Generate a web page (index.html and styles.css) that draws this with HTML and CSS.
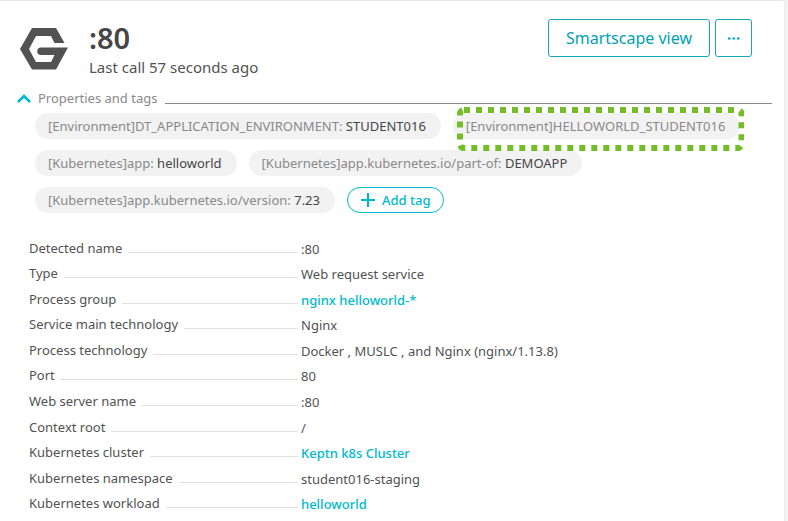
FILE: index.html
```html
<!DOCTYPE html>
<html lang="en">
<head>
<meta charset="utf-8">
<meta name="viewport" content="width=device-width, initial-scale=1">
<title>:80</title>
<link rel="stylesheet" href="styles.css">
</head>
<body>
<main class="card">
  <header class="header">
    <svg class="logo" viewBox="0 0 48 42" aria-hidden="true">
      <path d="M12 0H36L44.500 15H34.500L31 8H16L9 21L16 34H31L34.500 27H21A3.500 3.500 0 0 1 21 19.500H48L36 41.500H12L0 21Z" fill="#525252"/>
    </svg>
    <div class="heading">
      <h1 class="title">:80</h1>
      <p class="subtitle">Last call 57 seconds ago</p>
    </div>
    <div class="actions">
      <button class="button" type="button">Smartscape view</button>
      <button class="button button-more" type="button" aria-label="More">
        <svg width="12" height="3" viewBox="0 0 12 3" aria-hidden="true"><path d="M0 0.500h2.500v2H0zM4.500 0.500h2.500v2h-2.500zM9 0.500h2.500v2H9z" fill="#00a1b2"/></svg>
      </button>
    </div>
  </header>

  <section class="properties">
    <h2 class="section-head">
      <button class="toggle" type="button" aria-expanded="true">
        <svg width="14" height="9" viewBox="0 0 14 9" aria-hidden="true"><path d="M1 8L7 2L13 8" fill="none" stroke="#00b9cc" stroke-width="2.500"/></svg>
        Properties and tags
      </button>
    </h2>

    <ul class="tags">
      <li class="tag">[Environment]DT_APPLICATION_ENVIRONMENT: <span class="tag-value">STUDENT016</span></li>
      <li class="tag tag-marked">[Environment]HELLOWORLD_STUDENT016
        <svg class="marker" aria-hidden="true"><rect class="marker-line" x="3" y="3" rx="4"/></svg>
      </li>
      <li class="tag">[Kubernetes]app: <span class="tag-value">helloworld</span></li>
      <li class="tag">[Kubernetes]app.kubernetes.io/part-of: <span class="tag-value">DEMOAPP</span></li>
      <li class="tag">[Kubernetes]app.kubernetes.io/version: <span class="tag-value">7.23</span></li>
      <li>
        <button class="add-tag" type="button">
          <svg width="14" height="14" viewBox="0 0 14 14" aria-hidden="true"><path d="M7 0V14M0 7H14" stroke="#00b9cc" stroke-width="2"/></svg>
          Add tag
        </button>
      </li>
    </ul>

    <dl class="details">
      <div class="row"><dt class="label">Detected name</dt><dd class="value">:80</dd></div>
      <div class="row"><dt class="label">Type</dt><dd class="value">Web request service</dd></div>
      <div class="row"><dt class="label">Process group</dt><dd class="value"><a class="link" href="#">nginx helloworld-*</a></dd></div>
      <div class="row"><dt class="label">Service main technology</dt><dd class="value">Nginx</dd></div>
      <div class="row"><dt class="label">Process technology</dt><dd class="value">Docker , MUSLC , and Nginx (nginx/1.13.8)</dd></div>
      <div class="row"><dt class="label">Port</dt><dd class="value">80</dd></div>
      <div class="row"><dt class="label">Web server name</dt><dd class="value">:80</dd></div>
      <div class="row"><dt class="label">Context root</dt><dd class="value">/</dd></div>
      <div class="row"><dt class="label">Kubernetes cluster</dt><dd class="value"><a class="link" href="#">Keptn k8s Cluster</a></dd></div>
      <div class="row"><dt class="label">Kubernetes namespace</dt><dd class="value">student016-staging</dd></div>
      <div class="row"><dt class="label">Kubernetes workload</dt><dd class="value"><a class="link" href="#">helloworld</a></dd></div>
    </dl>
  </section>
</main>
</body>
</html>
```
FILE: styles.css
```css
* {
  box-sizing: border-box;
}

body {
  margin: 0;
  background: #f2f2f2;
  color: #525252;
  font-family: "Noto Sans", "Open Sans", sans-serif;
  font-size: 13px;
  line-height: 20px;
}

h1, h2, p, ul, dl, dd {
  margin: 0;
  padding: 0;
}

button {
  font: inherit;
  cursor: pointer;
}

.card {
  display: flex;
  flex-direction: column;
  min-height: 100vh;
  margin-right: 3px;
  padding: 18px 12px 5px 17px;
  border-top: 1px solid #e6e6e6;
  border-right: 1px solid #ececec;
  border-top-right-radius: 4px;
  background: #fff;
}

.header {
  display: flex;
  align-items: flex-start;
  padding-right: 20px;
}

.logo {
  width: 48px;
  height: 42px;
  margin: 9px 21px 0 3px;
}

.heading {
  flex: 1;
}

.title {
  color: #454646;
  font-size: 29px;
  font-weight: 600;
  line-height: 38px;
}

.subtitle {
  font-size: 15px;
  line-height: 20px;
}

.actions {
  display: flex;
  gap: 5px;
}

.button {
  height: 38px;
  padding: 0 17px;
  border: 1px solid #14a8b8;
  border-radius: 3px;
  background: #fff;
  color: #00a1b2;
  font-size: 16px;
  font-weight: 400;
}

.button-more {
  display: flex;
  align-items: center;
  justify-content: center;
  width: 37px;
  padding: 0;
}

.properties {
  display: flex;
  flex: 1;
  flex-direction: column;
}

.section-head {
  display: flex;
  align-items: flex-end;
  gap: 8px;
  margin-top: 13px;
  font-weight: 400;
}

.section-head::after {
  content: "";
  flex: 1;
  height: 1px;
  margin-bottom: 2px;
  background: #898989;
}

.toggle {
  display: flex;
  align-items: center;
  gap: 7px;
  height: 16px;
  padding: 0;
  border: 0;
  background: none;
  color: #898989;
  font-size: 13px;
}

.tags {
  display: flex;
  flex-wrap: wrap;
  gap: 11px 12px;
  margin: 7px 0 0 18px;
  list-style: none;
}

.tag {
  padding: 3px 15px 3px 13px;
  border-radius: 13px;
  background: #f2f2f2;
  color: #898989;
}

.tag-value {
  color: #454646;
}

.tag-marked {
  position: relative;
}

.marker {
  position: absolute;
  top: -6px;
  left: 4px;
  width: 100%;
  height: 44px;
}

.marker-line {
  width: calc(100% - 6px);
  height: 38px;
  fill: none;
  stroke: #73be28;
  stroke-width: 6px;
  stroke-dasharray: 6 6;
}

.add-tag {
  display: flex;
  align-items: center;
  gap: 7px;
  height: 26px;
  padding: 0 12px 0 13px;
  border: 1px solid #00b9cc;
  border-radius: 13px;
  background: #fff;
  color: #00b9cc;
  font-weight: 500;
}

.details {
  display: grid;
  flex: 1;
  grid-auto-rows: 1fr;
  margin: 22px 0 0 12px;
}

.row {
  display: grid;
  grid-template-columns: 269px 1fr;
  align-items: center;
  gap: 3px;
}

.label {
  display: flex;
  align-items: flex-end;
  gap: 6px;
}

.label::after {
  content: "";
  flex: 1;
  height: 1px;
  margin-bottom: 5px;
  background: #e0e0e0;
}

.value {
  padding-top: 2px;
}

.link {
  color: #00b9cc;
  font-weight: 500;
  text-decoration: none;
}
```
